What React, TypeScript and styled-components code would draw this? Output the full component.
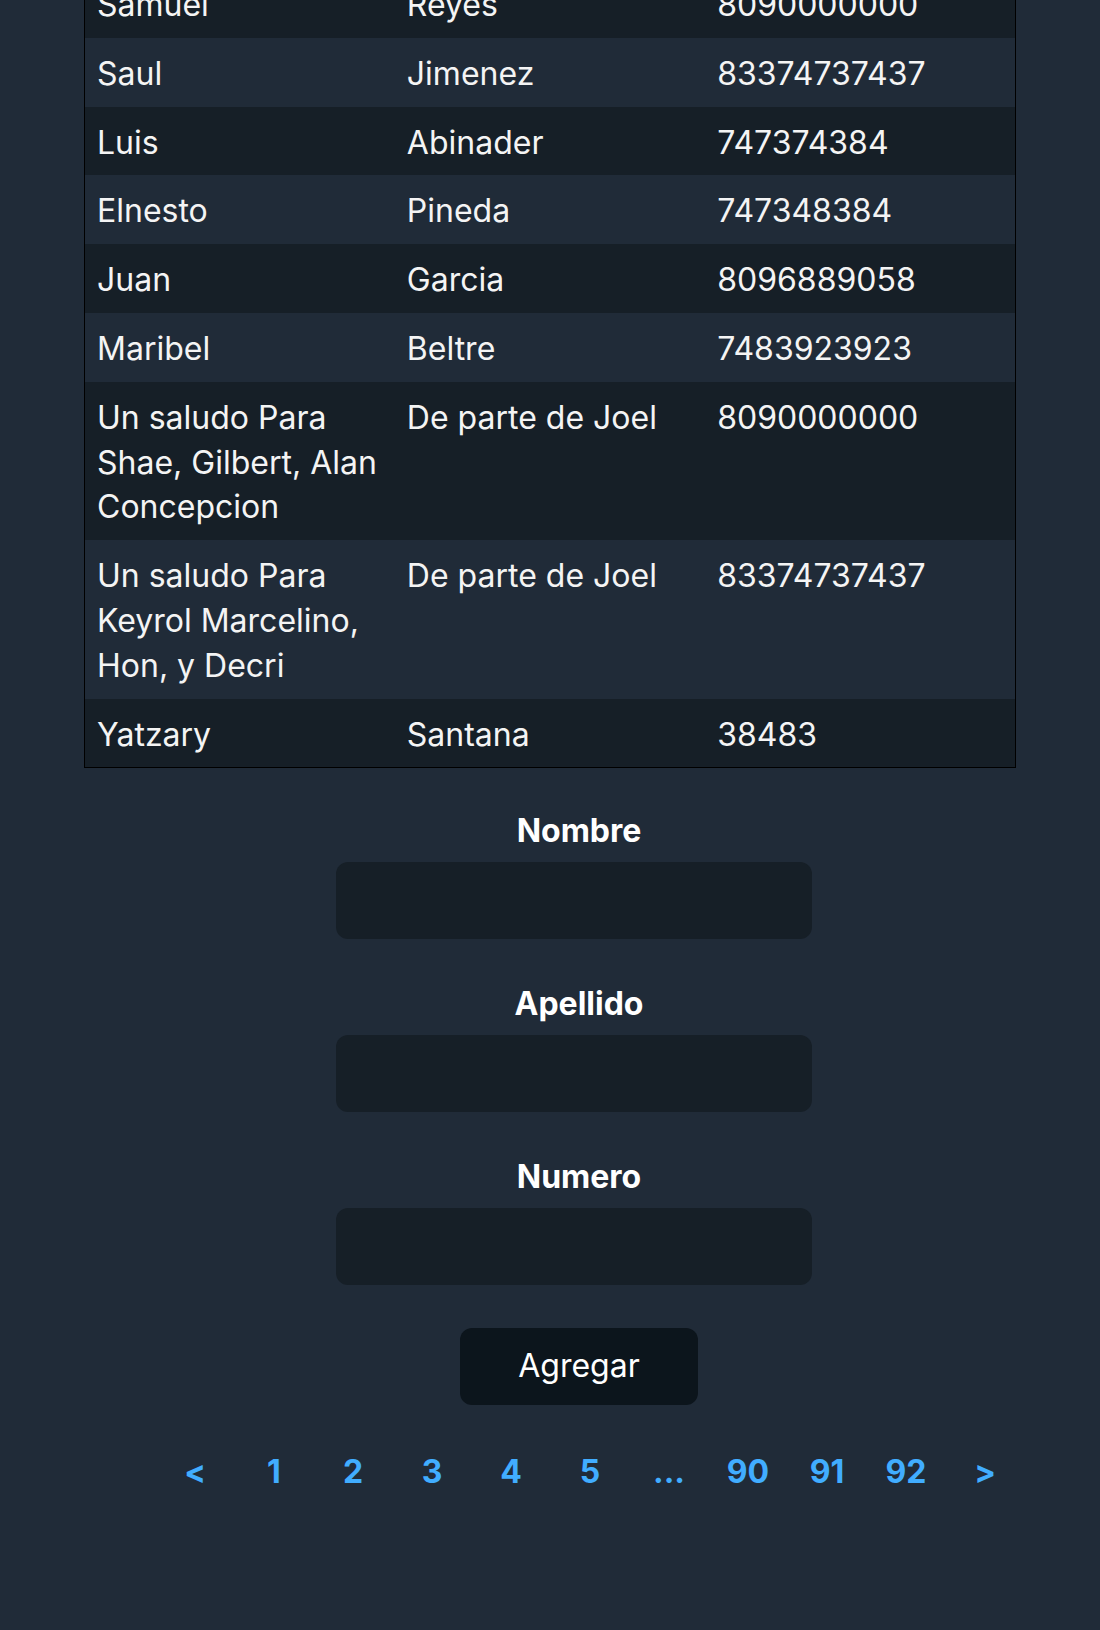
import React from 'react'
import styled, { createGlobalStyle } from 'styled-components'

const colors = {
  body: '#202b38',
  dark: '#161f27',
  button: '#0c151c',
  text: '#f4f4f4',
  bright: '#ffffff',
  link: '#41adff',
}

const GlobalStyle = createGlobalStyle`
  html, body {
    margin: 0;
    background: ${colors.body};
  }
  body {
    font-family: Inter, "Noto Sans", sans-serif;
    font-size: 32px;
    line-height: 44.8px;
    color: ${colors.text};
    overflow: hidden;
  }
`

type Contact = { nombre: string; apellido: string; numero: string }

const contacts: Contact[] = [
  { nombre: 'Samuel', apellido: 'Reyes', numero: '8090000000' },
  { nombre: 'Saul', apellido: 'Jimenez', numero: '83374737437' },
  { nombre: 'Luis', apellido: 'Abinader', numero: '747374384' },
  { nombre: 'Elnesto', apellido: 'Pineda', numero: '747348384' },
  { nombre: 'Juan', apellido: 'Garcia', numero: '8096889058' },
  { nombre: 'Maribel', apellido: 'Beltre', numero: '7483923923' },
  { nombre: 'Un saludo Para Shae, Gilbert, Alan Concepcion', apellido: 'De parte de Joel', numero: '8090000000' },
  { nombre: 'Un saludo Para Keyrol Marcelino, Hon, y Decri', apellido: 'De parte de Joel', numero: '83374737437' },
  { nombre: 'Yatzary', apellido: 'Santana', numero: '38483' },
]

const pages = ['<', '1', '2', '3', '4', '5', '...', '90', '91', '92', '>']

// page is scrolled: the first row is cut by the top of the window
const Page = styled.main`
  padding: 0 84px;
  margin-top: -32px;
`

const Table = styled.table`
  width: 100%;
  table-layout: fixed;
  border-collapse: collapse;
  border: 1px solid #000;
  margin-bottom: 41px;
`

const Row = styled.tr<{ $dark: boolean }>`
  background: ${p => (p.$dark ? colors.dark : 'transparent')};
`

const Cell = styled.td`
  padding: 14px 12px 10px;
  text-align: left;
  vertical-align: top;
  word-wrap: break-word;
  color: ${colors.text};
`

const Form = styled.form`
  display: flex;
  flex-direction: column;
  align-items: center;
  padding-left: 58px;
  gap: 43px;
`

const Field = styled.div`
  display: flex;
  flex-direction: column;
  align-items: center;
  gap: 8px;
`

const Label = styled.label`
  display: block;
  font-weight: 700;
  color: ${colors.bright};
`

const Input = styled.input`
  box-sizing: border-box;
  width: 476px;
  height: 77px;
  margin-right: 10px;
  border: none;
  border-radius: 12px;
  background: ${colors.dark};
  color: ${colors.text};
  font: inherit;
  padding: 0 20px;
  outline: none;
`

const Button = styled.button`
  width: 238px;
  height: 77px;
  border: none;
  border-radius: 12px;
  background: ${colors.button};
  color: ${colors.bright};
  font: inherit;
  cursor: pointer;
`

const Pager = styled.ul`
  display: flex;
  justify-content: center;
  list-style: none;
  margin: 45px 0 0;
  padding: 0 0 0 80px;
`

const PageItem = styled.li`
  flex: 0 0 79px;
  text-align: center;
  font-weight: 700;
  color: ${colors.link};
  cursor: pointer;
`

export default function App() {
  return (
    <>
      <GlobalStyle />
      <Page>
        <Table>
          <tbody>
            {contacts.map((c, i) => (
              <Row key={i} $dark={i % 2 === 0}>
                <Cell>{c.nombre}</Cell>
                <Cell>{c.apellido}</Cell>
                <Cell>{c.numero}</Cell>
              </Row>
            ))}
          </tbody>
        </Table>
        <Form onSubmit={e => e.preventDefault()}>
          <Field>
            <Label htmlFor="nombre">Nombre</Label>
            <Input id="nombre" />
          </Field>
          <Field>
            <Label htmlFor="apellido">Apellido</Label>
            <Input id="apellido" />
          </Field>
          <Field>
            <Label htmlFor="numero">Numero</Label>
            <Input id="numero" />
          </Field>
          <Button type="submit">Agregar</Button>
        </Form>
        <Pager>
          {pages.map(p => (
            <PageItem key={p}>{p}</PageItem>
          ))}
        </Pager>
      </Page>
    </>
  )
}
